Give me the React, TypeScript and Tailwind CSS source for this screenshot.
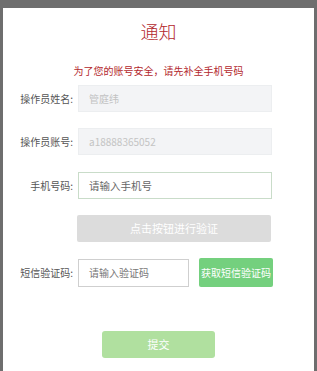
import React from "react";

const font = { fontFamily: '"Noto Sans CJK SC", "Noto Sans", sans-serif' };

function Label({ children }: { children: React.ReactNode }) {
  return (
    <div className="w-[70px] shrink-0 text-right text-[10px] text-[#555] leading-none whitespace-nowrap">
      {children}
    </div>
  );
}

export default function App() {
  return (
    <div className="w-[317px] h-[371px] bg-[#6e6e6e] pt-[8px] pl-[3px] pr-[3px] overflow-hidden" style={font}>
      <div className="w-[311px] h-[363px] bg-white flex flex-col pt-[9px]">
        <div className="h-[28px] leading-[28px] text-center text-[18px] text-[#b3282d] font-light">通知</div>
        <div className="mt-[19px] h-[14px] leading-[14px] text-center text-[10px] text-[#b3282d]">
          为了您的账号安全，请先补全手机号码
        </div>

        <div className="mt-[7px] flex items-center">
          <Label>操作员姓名:</Label>
          <div className="ml-[5px] w-[194px] h-[27px] bg-[#f3f4f6] border border-[#eceef0] flex items-center pl-[10px] text-[10px] text-[#c2c2c2]">
            管庭纬
          </div>
        </div>

        <div className="mt-[16px] flex items-center">
          <Label>操作员账号:</Label>
          <div className="ml-[5px] w-[194px] h-[27px] bg-[#f3f4f6] border border-[#eceef0] flex items-center pl-[10px] text-[10px] text-[#c4c4c4]">
            a18888365052
          </div>
        </div>

        <div className="mt-[17px] flex items-center">
          <Label>手机号码:</Label>
          <div className="ml-[5px] w-[194px] h-[27px] bg-white border border-[#c9dcc9] flex items-center pl-[10px] text-[10.5px] text-[#666]">
            请输入手机号
          </div>
        </div>

        <div className="mt-[16px] ml-[74px] w-[194px] h-[27px] bg-[#dcdcdc] rounded-[2px] flex items-center justify-center text-[11px] text-white">
          点击按钮进行验证
        </div>

        <div className="mt-[16px] flex items-center">
          <Label>短信验证码:</Label>
          <div className="ml-[5px] w-[111px] h-[28px] bg-white border border-[#cfcfcf] flex items-center pl-[10px] text-[10px] text-[#777]">
            请输入验证码
          </div>
          <div className="ml-[10px] w-[74px] h-[29px] bg-[#74d07e] rounded-[2px] flex items-center justify-center text-[10px] text-white whitespace-nowrap">
            获取短信验证码
          </div>
        </div>

        <div className="mt-[44px] ml-[99px] w-[113px] h-[27px] bg-[#b0e09f] rounded-[3px] flex items-center justify-center text-[11px] text-white">
          提交
        </div>
      </div>
    </div>
  );
}
